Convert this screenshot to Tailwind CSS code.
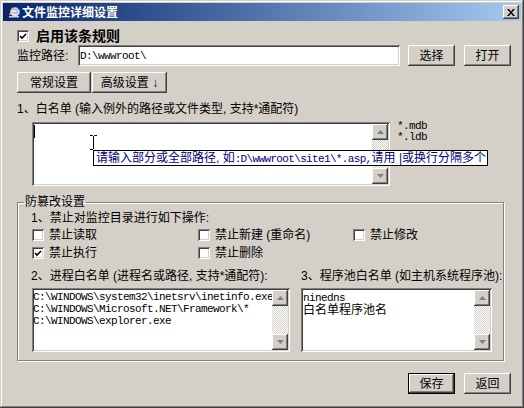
<!DOCTYPE html>
<html lang="en">
<head>
    <meta charset="UTF-8">
    <title>文件监控详细设置</title>
    <script src="https://cdn.jsdelivr.net/npm/@tailwindcss/browser@4"></script>
</head>
<body class="bg-[#d4d0c8]">
<div class="relative w-[524px] h-[408px] overflow-hidden bg-[#d4d0c8] p-[3px] text-[12px] leading-[14px] text-black font-['Liberation_Sans','Noto_Sans_CJK_SC',sans-serif] shadow-[inset_-1px_-1px_0_#404040,inset_1px_1px_0_#d4d0c8,inset_-2px_-2px_0_#808080,inset_2px_2px_0_#fff]">

    <!-- title bar -->
    <div class="flex items-center h-[18px] pl-[5px] pr-[2px] bg-gradient-to-r from-[#0a246a] to-[#a6caf0] text-white font-bold">
        <svg width="12" height="12" viewBox="0 0 12 12" class="shrink-0">
            <circle cx="7" cy="6" r="4.500" fill="#dfe6f5" stroke="#8fa3d8"/>
            <path d="M5 3.500c2-1 4 0 4.500 2M5 7h5" fill="none" stroke="#7f93cc"/>
            <path d="M4 1L5 6 2 9H1L3 5z" fill="#f7d84a"/>
            <path d="M1 10h10v1.500H1z" fill="#c9d3ee"/>
        </svg>
        <span class="ml-[2px] mt-[1px]">文件监控详细设置</span>
        <button class="ml-auto flex items-center justify-center w-[16px] h-[14px] bg-[#d4d0c8] shadow-[inset_-1px_-1px_0_#404040,inset_1px_1px_0_#fff,inset_-2px_-2px_0_#808080]">
            <svg width="8" height="7" viewBox="0 0 8 7"><path d="M0 0l2 0 2 2.500 2-2.500 2 0-3 3.500 3 3.500-2 0-2-2.500-2 2.500-2 0 3-3.500z" fill="#000"/></svg>
        </button>
    </div>

    <div class="pl-[14px] pr-[10px]">
        <!-- enable rule -->
        <div class="flex items-center h-[12px] mt-[9px]">
            <span class="flex items-center justify-center w-[12px] h-[12px] bg-white shadow-[inset_1px_1px_0_#808080,inset_-1px_-1px_0_#fff,inset_2px_2px_0_#404040,inset_-2px_-2px_0_#d4d0c8]">
                <svg width="8" height="7" viewBox="0 0 8 7"><path d="M1 3l2 2 4-4" fill="none" stroke="#000" stroke-width="1.600"/></svg>
            </span>
            <span class="ml-[7px] text-[14px] font-bold">启用该条规则</span>
        </div>

        <!-- path -->
        <div class="flex items-center h-[21px] mt-[3px]">
            <span class="w-[61px]">监控路径:</span>
            <div class="w-[322px] h-[21px] flex items-center pl-[2px] bg-white font-['Liberation_Mono','Noto_Sans_CJK_SC',monospace] text-[11px] tracking-[-0.6px] shadow-[inset_1px_1px_0_#808080,inset_-1px_-1px_0_#fff,inset_2px_2px_0_#404040,inset_-2px_-2px_0_#d4d0c8]">D:\wwwroot\</div>
            <button class="w-[47px] h-[21px] ml-[8px] shadow-[inset_-1px_-1px_0_#404040,inset_1px_1px_0_#fff,inset_-2px_-2px_0_#808080]">选择</button>
            <button class="w-[47px] h-[21px] ml-[9px] shadow-[inset_-1px_-1px_0_#404040,inset_1px_1px_0_#fff,inset_-2px_-2px_0_#808080]">打开</button>
        </div>

        <!-- tabs -->
        <div class="flex h-[21px] mt-[6px]">
            <button class="w-[74px] shadow-[inset_-1px_-1px_0_#404040,inset_1px_1px_0_#fff,inset_-2px_-2px_0_#808080]">常规设置</button>
            <button class="w-[75px] ml-[1px] shadow-[inset_-1px_-1px_0_#404040,inset_1px_1px_0_#fff,inset_-2px_-2px_0_#808080]">高级设置 ↓</button>
        </div>

        <!-- whitelist -->
        <div class="mt-[9px]">1、白名单 (输入例外的路径或文件类型, 支持*通配符)</div>
        <div class="flex mt-[6px] ml-[15px]">
            <div class="flex justify-between w-[358px] h-[64px] p-[2px] bg-white shadow-[inset_1px_1px_0_#808080,inset_-1px_-1px_0_#fff,inset_2px_2px_0_#404040,inset_-2px_-2px_0_#d4d0c8]">
                <span class="w-px h-[13px] mt-[1px] bg-black"></span>
                <div class="flex flex-col justify-between w-[16px] bg-[repeating-conic-gradient(#fff_0_25%,#d4d0c8_0_50%)] bg-[length:2px_2px]">
                    <span class="flex items-center justify-center h-[16px] bg-[#d4d0c8] shadow-[inset_-1px_-1px_0_#404040,inset_1px_1px_0_#fff,inset_-2px_-2px_0_#808080]"><svg width="7" height="4"><path d="M3.500 0L7 4H0z" fill="#808080"/></svg></span>
                    <span class="flex items-center justify-center h-[16px] bg-[#d4d0c8] shadow-[inset_-1px_-1px_0_#404040,inset_1px_1px_0_#fff,inset_-2px_-2px_0_#808080]"><svg width="7" height="4"><path d="M0 0h7L3.500 4z" fill="#808080"/></svg></span>
                </div>
            </div>
            <div class="ml-[7px] -mt-[2px] font-['Liberation_Mono',monospace] text-[11px] tracking-[-0.6px] leading-[11px] pt-[1px]">*.mdb<br>*.ldb</div>
        </div>

        <!-- tamper settings -->
        <fieldset class="mt-[9px] w-[487px] h-[166px] pl-[13px] border border-[#808080] shadow-[1px_1px_0_#fff,inset_1px_1px_0_#fff]">
            <legend class="-ml-[7px] px-[1px]">防篡改设置</legend>
            <div class="mt-[2px]">1、禁止对监控目录进行如下操作:</div>
            <div class="grid grid-cols-[166px_155px_auto] gap-y-[6px] mt-[4px] ml-px">
                <label class="flex items-center h-[12px]"><span class="w-[12px] h-[12px] mr-[5px] bg-white shadow-[inset_1px_1px_0_#808080,inset_-1px_-1px_0_#fff,inset_2px_2px_0_#404040,inset_-2px_-2px_0_#d4d0c8]"></span>禁止读取</label>
                <label class="flex items-center h-[12px]"><span class="w-[12px] h-[12px] mr-[5px] bg-white shadow-[inset_1px_1px_0_#808080,inset_-1px_-1px_0_#fff,inset_2px_2px_0_#404040,inset_-2px_-2px_0_#d4d0c8]"></span>禁止新建 (重命名)</label>
                <label class="flex items-center h-[12px]"><span class="w-[12px] h-[12px] mr-[5px] bg-white shadow-[inset_1px_1px_0_#808080,inset_-1px_-1px_0_#fff,inset_2px_2px_0_#404040,inset_-2px_-2px_0_#d4d0c8]"></span>禁止修改</label>
                <label class="flex items-center h-[12px]"><span class="flex items-center justify-center w-[12px] h-[12px] mr-[5px] bg-white shadow-[inset_1px_1px_0_#808080,inset_-1px_-1px_0_#fff,inset_2px_2px_0_#404040,inset_-2px_-2px_0_#d4d0c8]"><svg width="8" height="7" viewBox="0 0 8 7"><path d="M1 3l2 2 4-4" fill="none" stroke="#000" stroke-width="1.600"/></svg></span>禁止执行</label>
                <label class="flex items-center h-[12px]"><span class="w-[12px] h-[12px] mr-[5px] bg-white shadow-[inset_1px_1px_0_#808080,inset_-1px_-1px_0_#fff,inset_2px_2px_0_#404040,inset_-2px_-2px_0_#d4d0c8]"></span>禁止删除</label>
            </div>

            <div class="flex gap-[11px] mt-[10px]">
                <div class="w-[259px]">
                    <div class="whitespace-nowrap">2、进程白名单 (进程名或路径, 支持*通配符):</div>
                    <div class="flex justify-between h-[64px] mt-[5px] ml-px p-[2px] bg-white shadow-[inset_1px_1px_0_#808080,inset_-1px_-1px_0_#fff,inset_2px_2px_0_#404040,inset_-2px_-2px_0_#d4d0c8]">
                        <div class="w-[239px] -ml-px overflow-hidden pt-[1px] whitespace-nowrap font-['Liberation_Mono',monospace] text-[11px] tracking-[-0.6px] leading-[12px]">C:\WINDOWS\system32\inetsrv\inetinfo.exe<br>C:\WINDOWS\Microsoft.NET\Framework\*<br>C:\WINDOWS\explorer.exe</div>
                        <div class="flex flex-col justify-between w-[16px] shrink-0 bg-[repeating-conic-gradient(#fff_0_25%,#d4d0c8_0_50%)] bg-[length:2px_2px]">
                            <span class="flex items-center justify-center h-[16px] bg-[#d4d0c8] shadow-[inset_-1px_-1px_0_#404040,inset_1px_1px_0_#fff,inset_-2px_-2px_0_#808080]"><svg width="7" height="4"><path d="M3.500 0L7 4H0z" fill="#808080"/></svg></span>
                            <span class="flex items-center justify-center h-[16px] bg-[#d4d0c8] shadow-[inset_-1px_-1px_0_#404040,inset_1px_1px_0_#fff,inset_-2px_-2px_0_#808080]"><svg width="7" height="4"><path d="M0 0h7L3.500 4z" fill="#808080"/></svg></span>
                        </div>
                    </div>
                </div>
                <div class="w-[191px]">
                    <div class="whitespace-nowrap">3、程序池白名单 (如主机系统程序池):</div>
                    <div class="flex justify-between h-[64px] mt-[5px] p-[2px] bg-white shadow-[inset_1px_1px_0_#808080,inset_-1px_-1px_0_#fff,inset_2px_2px_0_#404040,inset_-2px_-2px_0_#d4d0c8]">
                        <div class="pt-[1px] leading-[12px]"><span class="font-['Liberation_Mono',monospace] text-[11px] tracking-[-0.6px]">ninedns</span><br>白名单程序池名</div>
                        <div class="flex flex-col justify-between w-[16px] shrink-0 bg-[repeating-conic-gradient(#fff_0_25%,#d4d0c8_0_50%)] bg-[length:2px_2px]">
                            <span class="flex items-center justify-center h-[16px] bg-[#d4d0c8] shadow-[inset_-1px_-1px_0_#404040,inset_1px_1px_0_#fff,inset_-2px_-2px_0_#808080]"><svg width="7" height="4"><path d="M3.500 0L7 4H0z" fill="#808080"/></svg></span>
                            <span class="flex items-center justify-center h-[16px] bg-[#d4d0c8] shadow-[inset_-1px_-1px_0_#404040,inset_1px_1px_0_#fff,inset_-2px_-2px_0_#808080]"><svg width="7" height="4"><path d="M0 0h7L3.500 4z" fill="#808080"/></svg></span>
                        </div>
                    </div>
                </div>
            </div>
        </fieldset>

        <!-- footer -->
        <div class="flex justify-end mt-[12px]">
            <button class="w-[47px] h-[21px] border border-black shadow-[inset_-1px_-1px_0_#404040,inset_1px_1px_0_#fff,inset_-2px_-2px_0_#808080]">保存</button>
            <button class="w-[47px] h-[21px] ml-[9px] shadow-[inset_-1px_-1px_0_#404040,inset_1px_1px_0_#fff,inset_-2px_-2px_0_#808080]">返回</button>
        </div>
    </div>

    <!-- mouse cursor and tooltip over the whitelist box -->
    <svg width="7" height="16" class="absolute left-[90px] top-[135px]"><path d="M0 .5h2.500L3.500 1.500 4.500.5H7M3.500 1.500V14M0 14.500h3" fill="none" stroke="#000"/></svg>
    <div class="absolute left-[93px] top-[150px] w-[395px] h-[16px] pl-[2px] border border-black bg-white text-[#000080] whitespace-nowrap leading-[15px]">请输入部分或全部路径, 如<span class="font-['Liberation_Mono',monospace] text-[11px] tracking-[-0.65px]">:D\wwwroot\site1\*.asp,</span>请用 |或换行分隔多个</div>
</div>
</body>
</html>
